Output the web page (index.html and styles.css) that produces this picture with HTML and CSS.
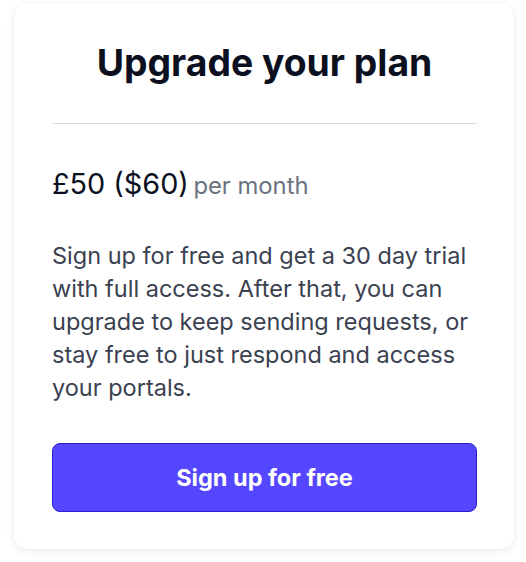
FILE: index.html
```html
<!DOCTYPE html>
<html lang="en">
<head>
<meta charset="utf-8">
<link rel="stylesheet" href="styles.css">
</head>
<body>
<div class="card">
  <h1 class="title">Upgrade your plan</h1>
  <hr class="divider">
  <div class="price"><span class="amount">£50 ($60)</span> <span class="period">per month</span></div>
  <p class="desc">Sign up for free and get a 30 day trial with full access. After that, you can upgrade to keep sending requests, or stay free to just respond and access your portals.</p>
  <button class="cta">Sign up for free</button>
</div>
</body>
</html>
```
FILE: styles.css
```css
html, body { margin: 0; padding: 0; background: #ffffff; }
body {
  font-family: Inter, "Noto Sans", sans-serif;
  padding: 3px 13px 13px 14px;
}
.card {
  width: 500px;
  box-sizing: border-box;
  background: #fff;
  border-radius: 14px;
  box-shadow: 0 2px 10px rgba(0,0,0,0.08), 0 0 2px rgba(0,0,0,0.04);
  padding: 38px 37px 37px 38px;
}
.title {
  margin: 0;
  text-align: center;
  font-size: 37.3px;
  font-weight: 700;
  color: #0b1021;
  line-height: 44px;
}
.divider {
  border: 0;
  border-top: 1px solid #d9dbe0;
  margin: 38px 0 0 0;
}
.price {
  margin-top: 40px;
  line-height: 40px;
}
.amount { font-size: 28.8px; color: #0b1021; }
.period { font-size: 23.8px; color: #6b7280; }
.desc {
  margin: 31px 0 0 0;
  font-size: 23.5px;
  line-height: 33px;
  color: #3a4150;
}
.cta {
  display: block;
  width: 100%;
  margin-top: 39px;
  height: 69px;
  background: #5546ff;
  border: 1px solid #2a1fd0;
  border-radius: 8px;
  color: #fff;
  font-family: Inter, sans-serif;
  font-size: 23.5px;
  font-weight: 700;
}
```
